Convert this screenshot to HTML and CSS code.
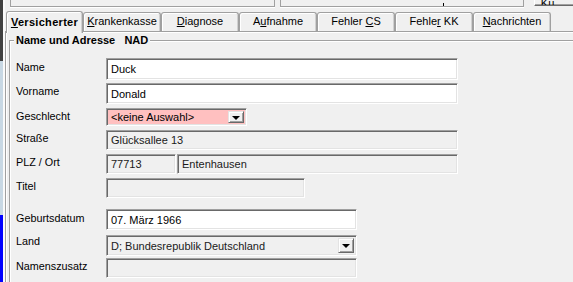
FILE: index.html
```html
<!DOCTYPE html>
<html lang="de">
<head>
    <meta charset="UTF-8">
    <title>Versicherter - Name und Adresse</title>
    <link rel="stylesheet" href="styles.css">
</head>
<body>
    <!-- strip of the window behind -->
    <div class="edge">
        <div class="edge-dark"></div>
        <div class="edge-light"></div>
        <div class="edge-blue"></div>
    </div>

    <div class="window">
        <!-- bottom of the toolbar fields above the tabs -->
        <div class="toolbar">
            <div class="tool-box tool-wide"></div>
            <div class="tool-box tool-mid"><span class="tick"></span></div>
            <div class="tool-btn"><u>K</u>ü</div>
        </div>

        <div class="tabs">
            <div class="tab active"><u>V</u>ersicherter</div>
            <div class="tab"><u>K</u>rankenkasse</div>
            <div class="tab"><u>D</u>iagnose</div>
            <div class="tab">A<u>u</u>fnahme</div>
            <div class="tab">Fehler <u>C</u>S</div>
            <div class="tab">Fehle<u>r</u> KK</div>
            <div class="tab"><u>N</u>achrichten</div>
        </div>

        <div class="panel">
            <div class="group">
                <div class="legend">Name und Adresse&nbsp;&nbsp;&nbsp;NAD</div>

                <div class="row row-name">
                    <label>Name</label>
                    <div class="field w-full">Duck</div>
                </div>
                <div class="row row-vorname">
                    <label>Vorname</label>
                    <div class="field w-full">Donald</div>
                </div>
                <div class="row row-combo">
                    <label>Geschlecht</label>
                    <div class="field combo pink w-combo">
                        <span class="combo-text">&lt;keine Auswahl&gt;</span>
                        <span class="drop"><span class="arrow"></span></span>
                    </div>
                </div>
                <div class="row">
                    <label>Straße</label>
                    <div class="field readonly w-full">Glücksallee 13</div>
                </div>
                <div class="row">
                    <label>PLZ / Ort</label>
                    <div class="field readonly w-zip">77713</div>
                    <div class="field readonly w-city">Entenhausen</div>
                </div>
                <div class="row">
                    <label>Titel</label>
                    <div class="field readonly w-title"></div>
                </div>
                <div class="row row-birth">
                    <label>Geburtsdatum</label>
                    <div class="field w-mid">07. März 1966</div>
                </div>
                <div class="row row-land">
                    <label>Land</label>
                    <div class="field combo readonly w-mid">
                        <span class="combo-text">D; Bundesrepublik Deutschland</span>
                        <span class="drop"><span class="arrow"></span></span>
                    </div>
                </div>
                <div class="row row-zusatz">
                    <label>Namenszusatz</label>
                    <div class="field readonly w-mid"></div>
                </div>
            </div>
        </div>
    </div>
</body>
</html>
```

FILE: styles.css
```css
body {
    margin: 0;
    height: 282px;
    overflow: hidden;
    display: flex;
    background-color: #f0f0f0;
    font-family: "Liberation Sans", Arial, sans-serif;
    font-size: 10.8px;
    color: #000;
}

/* window behind */
.edge {
    width: 3px;
    display: flex;
    flex-direction: column;
}

.edge-dark {
    height: 61px;
    background-color: #404040;
}

.edge-light {
    flex: 1;
    background-color: #c8d8e4;
}

.edge-blue {
    height: 67px;
    background-color: #0000ff;
}

.window {
    flex: 1;
    display: flex;
    flex-direction: column;
    border-left: 2px solid #fafafa;
    min-width: 0;
}

/* toolbar remains */
.toolbar {
    height: 8px;
    display: flex;
    align-items: flex-start;
}

.tool-box {
    height: 7px;
    box-sizing: border-box;
    border: 1px solid #a0a0a0;
    border-top: none;
    box-shadow: 0 1px 0 #fff;
}

.tool-wide {
    width: 271px;
    margin-left: 5px;
}

.tool-mid {
    width: 250px;
    margin-left: 5px;
    display: flex;
    justify-content: flex-end;
}

.tick {
    width: 1px;
    height: 3px;
    margin: 3px 79px 0 0;
    background-color: #000;
}

.tool-btn {
    width: 40px;
    height: 6px;
    margin-left: 10px;
    box-sizing: border-box;
    border-left: 1px solid #fff;
    border-bottom: 1px solid #696969;
    box-shadow: inset 0 -1px 0 #a0a0a0;
    line-height: 6px;
    padding-left: 6px;
    overflow: hidden;
    font-size: 11px;
}

.tool-btn u {
    text-underline-offset: -1px;
}

/* tabs */
.tabs {
    height: 23px;
    display: flex;
    align-items: flex-end;
    padding-left: 1px;
    position: relative;
    z-index: 1;
}

.tab {
    width: 78px;
    height: 19px;
    box-sizing: border-box;
    border: 1px solid #a0a0a0;
    border-bottom: none;
    border-radius: 3px 3px 0 0;
    box-shadow: inset 1px 1px 0 #fff, inset -1px 0 0 #d0d0d0;
    text-align: center;
    line-height: 17px;
    font-size: 11px;
    white-space: nowrap;
}

.tab u {
    text-underline-offset: 1px;
}

.tab.active {
    width: 77px;
    height: 22px;
    margin-bottom: -2px;
    font-weight: bold;
    background-color: #f0f0f0;
    line-height: 21px;
    letter-spacing: 0.3px;
}

/* panel */
.panel {
    flex: 1;
    min-height: 0;
    border-top: 1px solid #a0a0a0;
    border-left: 1px solid #a0a0a0;
    box-shadow: inset 1px 1px 0 #fff;
    padding: 8px 0 0 3px;
    overflow: hidden;
}

.group {
    height: 260px;
    border-top: 1px solid #a0a0a0;
    border-left: 1px solid #a0a0a0;
    box-shadow: inset 1px 1px 0 #fff;
    padding-left: 6px;
}

.legend {
    width: fit-content;
    height: 13px;
    margin: -7px 0 0 -2px;
    padding: 0 2px;
    background-color: #f0f0f0;
    font-weight: bold;
    font-size: 11px;
    line-height: 13px;
}

/* rows */
.row {
    display: flex;
    align-items: flex-start;
    height: 20px;
    margin-top: 4px;
}

.row label {
    width: 90px;
    flex: none;
    padding-top: 2px;
    line-height: 13px;
}

.row-name {
    height: 22px;
    margin-top: 11px;
}

.row-name label {
    padding-top: 3px;
}

.row-vorname {
    height: 21px;
    margin-top: 3px;
}

.row-combo {
    height: 18px;
}

.row-birth {
    height: 21px;
    margin-top: 11px;
}

.row-birth label {
    padding-top: 3px;
}

.row-land {
    height: 21px;
    margin-top: 5px;
}

.row-land label {
    padding-top: 0;
}

.row-zusatz {
    margin-top: 2px;
}

/* sunken fields */
.field {
    height: 100%;
    box-sizing: border-box;
    border-top: 1px solid #a0a0a0;
    border-left: 1px solid #a0a0a0;
    border-right: 1px solid #fff;
    border-bottom: 1px solid #fff;
    box-shadow: inset 1px 1px 0 #696969, inset -1px -1px 0 #e3e3e3;
    background-color: #fff;
    padding-left: 4px;
    display: flex;
    align-items: center;
    font-size: 11px;
    white-space: nowrap;
    overflow: hidden;
}

.field.readonly {
    background-color: #f0f0f0;
    color: #1a1a1a;
}

.field.pink {
    background-color: #ffc0c0;
}

.w-full {
    width: 352px;
}

.w-combo {
    width: 141px;
}

.w-zip {
    width: 70px;
}

.w-city {
    width: 281px;
    margin-left: 1px;
}

.w-title {
    width: 199px;
}

.w-mid {
    width: 251px;
}

/* combo box */
.combo {
    padding-right: 2px;
}

.combo-text {
    flex: 1;
}

.drop {
    width: 16px;
    height: calc(100% - 4px);
    box-sizing: border-box;
    background-color: #f0f0f0;
    border-top: 1px solid #e3e3e3;
    border-left: 1px solid #e3e3e3;
    border-right: 1px solid #696969;
    border-bottom: 1px solid #696969;
    box-shadow: inset 1px 1px 0 #fff, inset -1px -1px 0 #a0a0a0;
    display: flex;
    align-items: center;
    justify-content: center;
}

.arrow {
    width: 0;
    height: 0;
    border-left: 4px solid transparent;
    border-right: 4px solid transparent;
    border-top: 4px solid #000;
    margin-top: 1px;
}
```
